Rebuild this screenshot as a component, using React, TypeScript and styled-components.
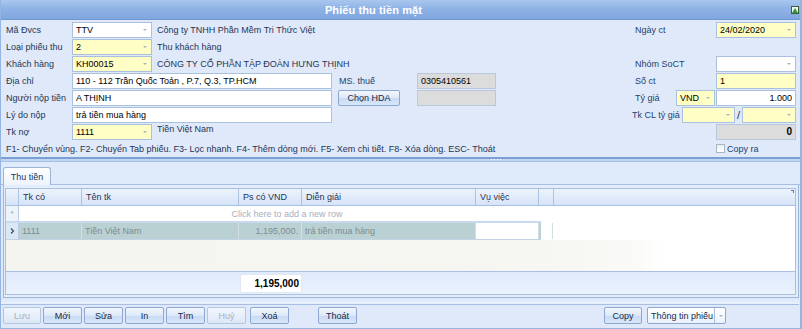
import React from "react";
import styled, { createGlobalStyle, css } from "styled-components";

const Global = createGlobalStyle`
  html, body { margin: 0; padding: 0; background: #dfe9f9; }
  body { font-family: "Liberation Sans", Arial, sans-serif; font-size: 9px; color: #000; }
  * { box-sizing: border-box; }
`;

const Window = styled.div`
  width: 802px;
  height: 329px;
  display: flex;
  flex-direction: column;
  background: #dfe9f9;
  border-left: 1px solid #94b4e2;
  border-right: 2px solid #94b4e2;
  overflow: hidden;
`;

const TitleBar = styled.div`
  height: 20px;
  flex: none;
  display: flex;
  align-items: center;
  justify-content: center;
  position: relative;
  background: linear-gradient(#a9c6ee 0%, #8fb3e6 45%, #7ea6df 100%);
  border-bottom: 1px solid #7097cf;
  padding-right: 54px;
`;

const Title = styled.div`
  color: #fff;
  font-size: 11px;
  font-weight: bold;
  letter-spacing: 0.1px;
`;

const TitleIcon = styled.div`
  position: absolute;
  right: 1px;
  top: 6px;
  width: 8px;
  height: 8px;
  border: 1px solid #3a5f3a;
  background: #f4f4f4;
  display: flex;
  align-items: flex-end;
  justify-content: center;
`;

const FormArea = styled.div`
  height: 137px;
  flex: none;
  display: flex;
  padding: 1px 5px 0 5px;
`;

const LeftCol = styled.div`
  width: 495px;
  display: flex;
  flex-direction: column;
`;

const RightCol = styled.div`
  margin-left: auto;
  width: 164px;
  display: flex;
  flex-direction: column;
  margin-right: -1px;
`;

const Row = styled.div`
  height: 17px;
  display: flex;
  align-items: center;
`;

const Label = styled.div<{ $w: number; $blue?: boolean }>`
  width: ${(p) => p.$w}px;
  flex: none;
  color: ${(p) => (p.$blue ? "#23436f" : "#1f3556")};
  white-space: nowrap;
`;

const Info = styled.div<{ $up?: boolean }>`
  margin-left: 5px;
  color: #1f3556;
  white-space: nowrap;
  ${(p) => p.$up && css`margin-top: -5px;`}
`;

type Tone = "white" | "yellow" | "gray";

const Box = styled.div<{ $w: number; $tone: Tone; $right?: boolean; $ml?: number; $bold?: boolean }>`
  width: ${(p) => p.$w}px;
  height: 16px;
  flex: none;
  margin-left: ${(p) => p.$ml ?? 0}px;
  display: flex;
  align-items: center;
  padding: 0 3px;
  border: 1px solid ${(p) => (p.$tone === "gray" ? "#b9c8dc" : "#a9c0df")};
  background: ${(p) => (p.$tone === "yellow" ? "#fffec4" : p.$tone === "gray" ? "#dcdcdc" : "#ffffff")};
  justify-content: ${(p) => (p.$right ? "flex-end" : "flex-start")};
  font-weight: ${(p) => (p.$bold ? "bold" : "normal")};
  font-size: ${(p) => (p.$bold ? "10px" : "9px")};
  white-space: nowrap;
  overflow: hidden;
`;

const BoxText = styled.span`
  flex: 1;
  overflow: hidden;
`;

const Arrow = styled.span`
  flex: none;
  width: 0;
  height: 0;
  border-left: 2.5px solid transparent;
  border-right: 2.5px solid transparent;
  border-top: 2.5px solid #a9b4c4;
  margin-left: 2px;
  margin-right: 1px;
`;

const Slash = styled.span`
  width: 7px;
  text-align: center;
  font-size: 11px;
  color: #1f3556;
  flex: none;
`;

const Btn = styled.div<{ $w: number; $ml?: number; $disabled?: boolean }>`
  width: ${(p) => p.$w}px;
  height: 16px;
  flex: none;
  margin-left: ${(p) => p.$ml ?? 0}px;
  display: flex;
  align-items: center;
  justify-content: center;
  border: 1px solid ${(p) => (p.$disabled ? "#b3c6e0" : "#8ca8d0")};
  border-radius: 2px;
  background: ${(p) =>
    p.$disabled
      ? "linear-gradient(#f2f6fc, #dde8f7)"
      : "linear-gradient(#f3f7fd 0%, #dde8f8 50%, #c7daf4 51%, #d8e6f9 100%)"};
  color: ${(p) => (p.$disabled ? "#a5b0c0" : "#15294b")};
  white-space: nowrap;
`;

const HelpText = styled.div`
  color: #1f3556;
  white-space: nowrap;
`;

const CheckRow = styled(Row)`
  padding-left: 84px;
`;

const Check = styled.span`
  width: 9px;
  height: 9px;
  border: 1px solid #a9b6c8;
  background: linear-gradient(#e9edf2, #ffffff);
  margin-right: 2px;
  flex: none;
`;

const Splitter = styled.div`
  height: 5px;
  flex: none;
  border-top: 2px solid #7b9fd3;
  background: #c3d6f1;
  border-bottom: 1px solid #a5c0e6;
  display: flex;
  justify-content: center;
  padding-left: 190px;
`;

const Grip = styled.div`
  width: 10px;
  height: 1px;
  margin-top: 0px;
  background: repeating-linear-gradient(90deg, #ffffff 0 1px, transparent 1px 3px);
`;

const TabStrip = styled.div`
  height: 23px;
  flex: none;
  display: flex;
  align-items: flex-end;
  padding-left: 2px;
  border-bottom: 1px solid #a6bfe2;
  background: #dfeafb;
`;

const Tab = styled.div`
  width: 48px;
  height: 18px;
  margin-bottom: -1px;
  border: 1px solid #9ab3d6;
  border-bottom: none;
  border-radius: 3px 3px 0 0;
  background: linear-gradient(#ffffff, #edf3fc);
  display: flex;
  align-items: center;
  justify-content: center;
  color: #1f3556;
`;

const GridPanel = styled.div`
  height: 113px;
  flex: none;
  margin: 0 1px 0 2px;
  border: 1px solid #9db6d8;
  border-top: none;
  padding: 3px 2px 2px 1px;
  background: #e3edfb;
  display: flex;
`;

const Grid = styled.div`
  flex: 1;
  display: flex;
  flex-direction: column;
  border: 1px solid #a9bfdf;
  background: #fff;
`;

const cols = [13, 63, 157, 63, 174, 63, 15];

const HeaderRow = styled.div`
  height: 17px;
  flex: none;
  display: flex;
  background: linear-gradient(#edf3fd 0%, #e1ebfa 50%, #d6e4f8 100%);
  border-bottom: 1px solid #a9bfdf;
`;

const HCell = styled.div<{ $w: number }>`
  width: ${(p) => p.$w}px;
  flex: none;
  border-right: 1px solid #aec3e1;
  display: flex;
  align-items: center;
  padding-left: 4px;
  color: #1f3556;
  white-space: nowrap;
`;

const HFill = styled.div`
  flex: 1;
  position: relative;
`;

const CornerMark = styled.div`
  position: absolute;
  right: 1px;
  top: 1px;
  width: 3px;
  height: 3px;
  border-top: 1px solid #5877a8;
  border-right: 1px solid #5877a8;
`;

const NewRow = styled.div`
  height: 17px;
  flex: none;
  width: 535px;
  display: flex;
  border-bottom: 2px solid #c8d8ee;
`;

const Indicator = styled.div<{ $bg: string }>`
  width: 13px;
  flex: none;
  border-right: 1px solid #b9cbe4;
  background: ${(p) => p.$bg};
  display: flex;
  align-items: center;
  justify-content: center;
  color: #8aa0be;
  font-size: 8px;
`;

const NewRowText = styled.div`
  flex: 1;
  display: flex;
  align-items: center;
  justify-content: center;
  color: #a7b0bd;
  padding-left: 14px;
`;

const DataRow = styled.div`
  height: 17px;
  flex: none;
  width: 535px;
  display: flex;
  background: #b9d1d3;
  border-bottom: 1px solid #c3d3e6;
`;

const DCell = styled.div<{ $w: number; $right?: boolean; $white?: boolean }>`
  width: ${(p) => p.$w}px;
  flex: none;
  border-right: 1px solid #d2dfe3;
  display: flex;
  align-items: center;
  justify-content: ${(p) => (p.$right ? "flex-end" : "flex-start")};
  padding: 0 3px;
  color: #7f8c8f;
  background: ${(p) => (p.$white ? "#fff" : "transparent")};
  white-space: nowrap;
  overflow: hidden;
`;

const Empty = styled.div`
  flex: 1;
  background: linear-gradient(90deg, #f4f5ef 0%, #f6f7f2 70%, #fafbf8 80%, #ffffff 83%);
`;

const Footer = styled.div`
  height: 23px;
  flex: none;
  display: flex;
  align-items: center;
  border-top: 1px solid #a9bfdf;
  background: linear-gradient(#dfeafb, #eaf2fd);
  padding-left: 234px;
`;

const TotalBox = styled.div`
  width: 62px;
  height: 19px;
  background: #fff;
  border: 1px solid #e0e8f4;
  display: flex;
  align-items: center;
  justify-content: flex-end;
  padding-right: 2px;
  font-weight: bold;
  font-size: 10px;
`;

const PanelBottom = styled.div`
  height: 7px;
  flex: none;
  margin: 0 1px 0 0;
  border-bottom: 1px solid #a6bfe2;
  background: linear-gradient(#dce8fa, #e6effc);
`;

const Toolbar = styled.div`
  flex: 1;
  display: flex;
  align-items: flex-start;
  padding: 2px 4px 0 2px;
  gap: 2px;
  border-bottom: 1px solid #9ab6de;
`;

const ToolBtn = styled(Btn)`
  height: 17px;
`;

const Spacer = styled.div`
  flex: 1;
`;

const SplitBtn = styled.div`
  width: 79px;
  height: 17px;
  margin-left: 3px;
  margin-right: 70px;
  display: flex;
  border: 1px solid #8ca8d0;
  border-radius: 2px;
  background: linear-gradient(#ffffff, #eaf1fb);
  color: #15294b;
`;

const SplitMain = styled.div`
  flex: 1;
  display: flex;
  align-items: center;
  padding-left: 3px;
  border-right: 1px solid #a8bddb;
  white-space: nowrap;
`;

const SplitArrow = styled.div`
  width: 10px;
  display: flex;
  align-items: center;
  justify-content: center;
`;

const Field = ({ w, tone, value, arrow, right, ml, bold }: { w: number; tone: Tone; value?: string; arrow?: boolean; right?: boolean; ml?: number; bold?: boolean }) => (
  <Box $w={w} $tone={tone} $right={right} $ml={ml} $bold={bold}>
    {right ? value : <BoxText>{value}</BoxText>}
    {arrow && <Arrow />}
  </Box>
);

export default function App() {
  return (
    <>
      <Global />
      <Window>
        <TitleBar>
          <Title>Phiếu thu tiền mặt</Title>
          <TitleIcon>
            <svg width="6" height="5" viewBox="0 0 6 5">
              <polygon points="3,0 6,5 0,5" fill="#2e9a3a" />
            </svg>
          </TitleIcon>
        </TitleBar>
        <FormArea>
          <LeftCol>
            <Row>
              <Label $w={66}>Mã Đvcs</Label>
              <Field w={80} tone="white" value="TTV" arrow />
              <Info>Công ty TNHH Phần Mềm Tri Thức Việt</Info>
            </Row>
            <Row>
              <Label $w={66}>Loại phiếu thu</Label>
              <Field w={80} tone="yellow" value="2" arrow />
              <Info>Thu khách hàng</Info>
            </Row>
            <Row>
              <Label $w={66}>Khách hàng</Label>
              <Field w={80} tone="yellow" value="KH00015" arrow />
              <Info>CÔNG TY CỔ PHẦN TẬP ĐOÀN HƯNG THỊNH</Info>
            </Row>
            <Row>
              <Label $w={66}>Địa chỉ</Label>
              <Field w={260} tone="white" value="110 - 112 Trần Quốc Toản , P.7, Q.3, TP.HCM" />
              <Label $w={78} style={{ marginLeft: 7 }} $blue>MS. thuế</Label>
              <Field w={79} tone="gray" value="0305410561" />
            </Row>
            <Row>
              <Label $w={66}>Người nộp tiền</Label>
              <Field w={260} tone="white" value="A THỊNH" />
              <Btn $w={62} $ml={6}>Chọn HDA</Btn>
              <Field w={79} tone="gray" ml={17} />
            </Row>
            <Row>
              <Label $w={66}>Lý do nộp</Label>
              <Field w={260} tone="white" value="trả tiền mua hàng" />
            </Row>
            <Row>
              <Label $w={66}>Tk nợ</Label>
              <Field w={80} tone="yellow" value="1111" arrow />
              <Info $up>Tiền Việt Nam</Info>
            </Row>
            <Row>
              <HelpText>F1- Chuyển vùng. F2- Chuyển Tab phiếu. F3- Lọc nhanh. F4- Thêm dòng mới. F5- Xem chi tiết. F8- Xóa dòng. ESC- Thoát</HelpText>
            </Row>
          </LeftCol>
          <RightCol>
            <Row>
              <Label $w={84} $blue style={{ paddingLeft: 3 }}>Ngày ct</Label>
              <Field w={80} tone="yellow" value="24/02/2020" arrow />
            </Row>
            <Row />
            <Row>
              <Label $w={84} $blue style={{ paddingLeft: 3 }}>Nhóm SoCT</Label>
              <Field w={80} tone="white" arrow />
            </Row>
            <Row>
              <Label $w={84} $blue style={{ paddingLeft: 3 }}>Số ct</Label>
              <Field w={80} tone="yellow" value="1" />
            </Row>
            <Row>
              <Label $w={44} $blue style={{ paddingLeft: 3 }}>Tỷ giá</Label>
              <Field w={39} tone="yellow" value="VND" arrow />
              <Field w={80} tone="white" value="1.000" right ml={1} />
            </Row>
            <Row>
              <Label $w={50} $blue>Tk CL tỷ giá</Label>
              <Field w={53} tone="yellow" arrow />
              <Slash>/</Slash>
              <Field w={54} tone="yellow" arrow />
            </Row>
            <Row>
              <Field w={80} tone="gray" value="0" right bold ml={84} />
            </Row>
            <CheckRow>
              <Check />
              <Label $w={40} $blue>Copy ra</Label>
            </CheckRow>
          </RightCol>
        </FormArea>
        <Splitter>
          <Grip />
        </Splitter>
        <TabStrip>
          <Tab>Thu tiền</Tab>
        </TabStrip>
        <GridPanel>
          <Grid>
            <HeaderRow>
              <HCell $w={cols[0]} />
              <HCell $w={cols[1]}>Tk có</HCell>
              <HCell $w={cols[2]}>Tên tk</HCell>
              <HCell $w={cols[3]}>Ps có VND</HCell>
              <HCell $w={cols[4]}>Diễn giải</HCell>
              <HCell $w={cols[5]}>Vụ việc</HCell>
              <HCell $w={cols[6]} />
              <HFill>
                <CornerMark />
              </HFill>
            </HeaderRow>
            <NewRow>
              <Indicator $bg="#eef3fa">*</Indicator>
              <NewRowText>Click here to add a new row</NewRowText>
            </NewRow>
            <DataRow>
              <Indicator $bg="#dde7f3">
                <svg width="5" height="6" viewBox="0 0 5 6">
                  <polyline points="1,0.5 3.5,3 1,5.5" fill="none" stroke="#3c5276" strokeWidth="1.3" />
                </svg>
              </Indicator>
              <DCell $w={cols[1]}>1111</DCell>
              <DCell $w={cols[2]}>Tiền Việt Nam</DCell>
              <DCell $w={cols[3]} $right>1,195,000.</DCell>
              <DCell $w={cols[4]}>trả tiền mua hàng</DCell>
              <DCell $w={cols[5]} $white />
              <DCell $w={cols[6] - 1} />
            </DataRow>
            <Empty />
            <Footer>
              <TotalBox>1,195,000</TotalBox>
            </Footer>
          </Grid>
        </GridPanel>
        <PanelBottom />
        <Toolbar>
          <ToolBtn $w={38} $disabled>Lưu</ToolBtn>
          <ToolBtn $w={39}>Mới</ToolBtn>
          <ToolBtn $w={39}>Sửa</ToolBtn>
          <ToolBtn $w={39}>In</ToolBtn>
          <ToolBtn $w={39}>Tìm</ToolBtn>
          <ToolBtn $w={39} $disabled>Huỷ</ToolBtn>
          <ToolBtn $w={39} $ml={2}>Xoá</ToolBtn>
          <ToolBtn $w={39} $ml={27}>Thoát</ToolBtn>
          <Spacer />
          <ToolBtn $w={38}>Copy</ToolBtn>
          <SplitBtn>
            <SplitMain>Thông tin phiếu</SplitMain>
            <SplitArrow>
              <Arrow />
            </SplitArrow>
          </SplitBtn>
        </Toolbar>
      </Window>
    </>
  );
}
